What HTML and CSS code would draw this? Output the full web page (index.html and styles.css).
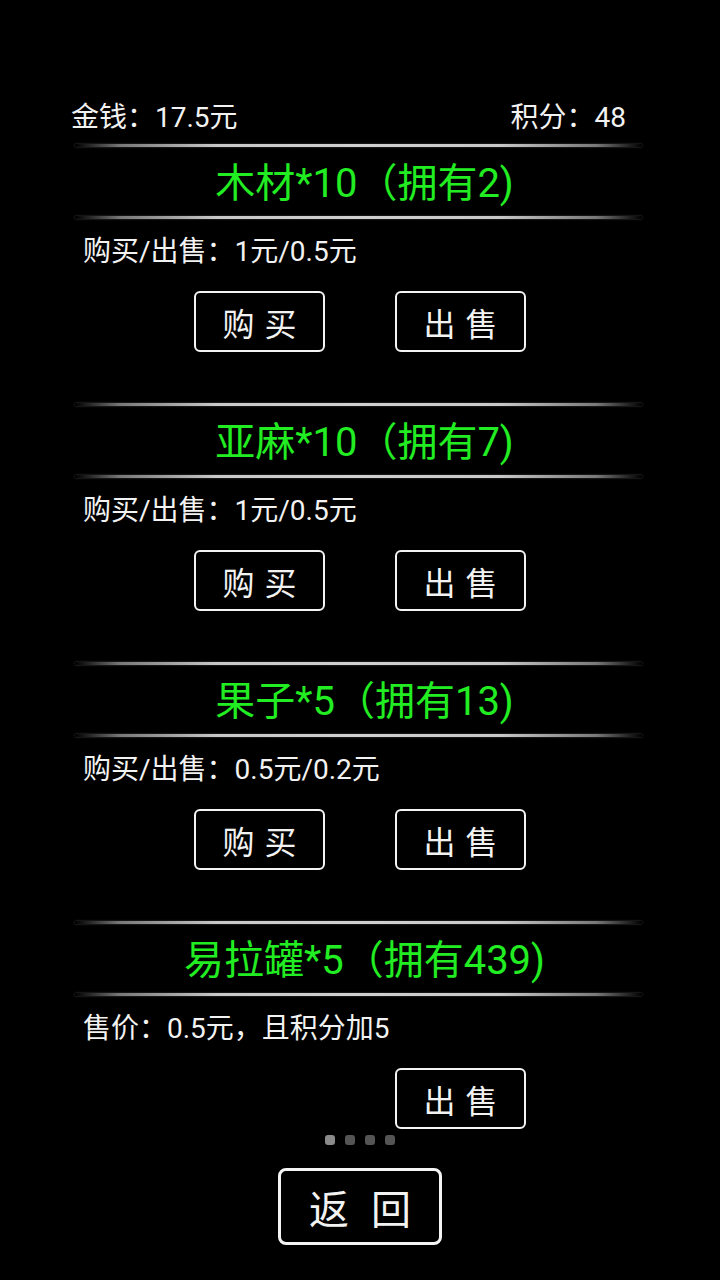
FILE: index.html
```html
<!DOCTYPE html>
<html lang="zh">
<head>
<meta charset="utf-8">
<link rel="stylesheet" href="styles.css">
</head>
<body>
<div class="page">
  <div class="header">
    <span>金钱：17.5元</span>
    <span>积分：48</span>
  </div>

  <div class="item">
    <div class="rule"></div>
    <div class="title">木材*10（拥有2)</div>
    <div class="rule"></div>
    <div class="price">购买/出售：1元/0.5元</div>
    <div class="actions">
      <div class="btn">购买</div>
      <div class="btn">出售</div>
    </div>
  </div>

  <div class="item">
    <div class="rule"></div>
    <div class="title">亚麻*10（拥有7)</div>
    <div class="rule"></div>
    <div class="price">购买/出售：1元/0.5元</div>
    <div class="actions">
      <div class="btn">购买</div>
      <div class="btn">出售</div>
    </div>
  </div>

  <div class="item">
    <div class="rule"></div>
    <div class="title">果子*5（拥有13)</div>
    <div class="rule"></div>
    <div class="price">购买/出售：0.5元/0.2元</div>
    <div class="actions">
      <div class="btn">购买</div>
      <div class="btn">出售</div>
    </div>
  </div>

  <div class="item last">
    <div class="rule"></div>
    <div class="title">易拉罐*5（拥有439)</div>
    <div class="rule"></div>
    <div class="price">售价：0.5元，且积分加5</div>
    <div class="actions">
      <div class="btn ghost"></div>
      <div class="btn">出售</div>
    </div>
  </div>

  <div class="dots">
    <span class="dot on"></span>
    <span class="dot"></span>
    <span class="dot"></span>
    <span class="dot"></span>
  </div>

  <div class="footer">
    <div class="back">返回</div>
  </div>
</div>
</body>
</html>
```

FILE: styles.css
```css
html, body {
  margin: 0;
  padding: 0;
  background: #000;
}
body {
  width: 720px;
  height: 1280px;
  overflow: hidden;
  font-family: Roboto, "Noto Sans CJK SC", sans-serif;
  color: #f2f2f2;
}
.page {
  display: flex;
  flex-direction: column;
  padding-top: 100px;
}
.header {
  display: flex;
  justify-content: space-between;
  padding: 0 94px 0 71px;
  height: 36px;
  line-height: 36px;
  font-size: 28px;
  margin-bottom: 7.5px;
}
.item {
  display: flex;
  flex-direction: column;
  padding-bottom: 50.5px;
}
.item.last {
  padding-bottom: 0;
}
.rule {
  height: 3px;
  margin: 0 78px 0 75px;
  background: linear-gradient(to right, rgba(200,200,200,0) 0%, rgba(200,200,200,0.6) 8%, #c8c8c8 25%, #d0d0d0 50%, #c8c8c8 75%, rgba(200,200,200,0.6) 92%, rgba(200,200,200,0) 100%);
  box-shadow: 0 0 2px rgba(160,160,160,0.5);
}
.title {
  height: 69px;
  line-height: 73px;
  text-align: center;
  font-size: 40px;
  color: #22ec22;
  padding-left: 9px;
}
.price {
  margin-top: 15.5px;
  height: 36px;
  line-height: 36px;
  font-size: 28px;
  padding-left: 83px;
}
.actions {
  margin-top: 21px;
  display: flex;
  justify-content: center;
  gap: 70px;
}
.btn {
  box-sizing: border-box;
  width: 131px;
  height: 61px;
  border: 2px solid #f4f4f4;
  border-radius: 6px;
  display: flex;
  align-items: center;
  justify-content: center;
  font-size: 32px;
  letter-spacing: 10px;
  padding-left: 10px;
}
.btn.ghost {
  visibility: hidden;
}
.dots {
  margin-top: 6px;
  height: 10px;
  display: flex;
  justify-content: center;
  gap: 10px;
}
.dot {
  width: 10px;
  height: 10px;
  border-radius: 3px;
  background: #555;
}
.dot.on {
  background: #8a8a8a;
}
.footer {
  margin-top: 23px;
  display: flex;
  justify-content: center;
}
.back {
  box-sizing: border-box;
  width: 164px;
  height: 77px;
  border: 3px solid #f4f4f4;
  border-radius: 8px;
  display: flex;
  align-items: center;
  justify-content: center;
  font-size: 40px;
  letter-spacing: 22px;
  padding-left: 22px;
}
```
